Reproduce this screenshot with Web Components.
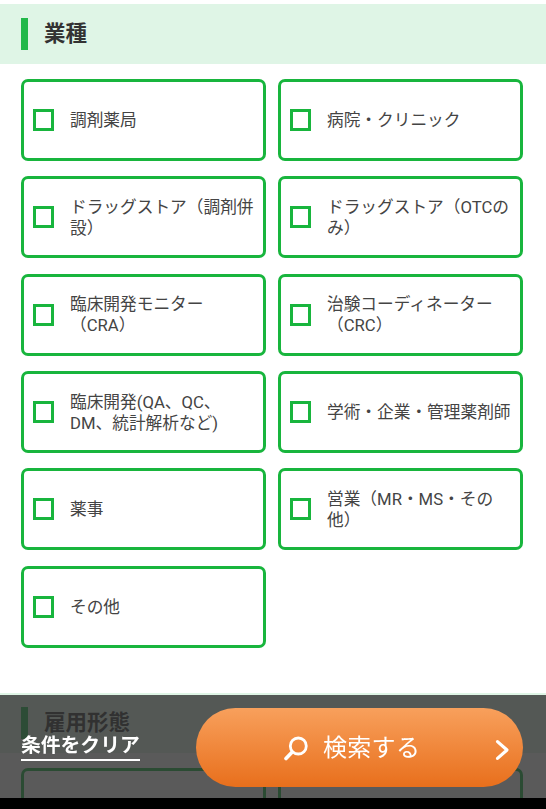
<!DOCTYPE html>
<html lang="ja">
<head>
<meta charset="utf-8">
<title>業種</title>
<style>
  html, body { margin: 0; height: 100%; overflow: hidden; background: #fff; }
  body {
    font-family: Roboto, "Noto Sans CJK JP", sans-serif;
    color: #444;
  }
  .page { padding-top: 4px; height: 805px; overflow: hidden; }
</style>
</head>
<body>
<div class="page">
  <section-title>業種</section-title>
  <check-grid>
    <check-card>調剤薬局</check-card>
    <check-card>病院・クリニック</check-card>
    <check-card>ドラッグストア（調剤併設）</check-card>
    <check-card>ドラッグストア（OTCのみ）</check-card>
    <check-card>臨床開発モニター（CRA）</check-card>
    <check-card>治験コーディネーター（CRC）</check-card>
    <check-card>臨床開発(QA、QC、DM、統計解析など)</check-card>
    <check-card>学術・企業・管理薬剤師</check-card>
    <check-card>薬事</check-card>
    <check-card>営業（MR・MS・その他）</check-card>
    <check-card>その他</check-card>
  </check-grid>
  <section-title>雇用形態</section-title>
  <check-grid>
    <check-card></check-card>
    <check-card></check-card>
  </check-grid>
</div>
<search-footer></search-footer>

<script>
class SectionTitle extends HTMLElement {
    constructor() {
        super();
        this.attachShadow({ mode: "open" });
        this.shadowRoot.innerHTML = `
        <style>
            :host {
                display: flex;
                align-items: center;
                height: 60px;
                padding-left: 21px;
                background: #dff5e6;
            }
            .bar {
                width: 7px;
                height: 32px;
                background: #22b84a;
                margin-right: 16px;
            }
            h2 {
                margin: 0;
                font-size: 21.5px;
                line-height: 30px;
                font-weight: bold;
                color: #333;
            }
        </style>
        <div class="bar"></div>
        <h2><slot></slot></h2>`;
    }
}

class CheckGrid extends HTMLElement {
    constructor() {
        super();
        this.attachShadow({ mode: "open" });
        this.shadowRoot.innerHTML = `
        <style>
            :host {
                display: grid;
                grid-template-columns: 245px 245px;
                column-gap: 12px;
                row-gap: 15.35px;
                padding: 15px 23px 45.65px 21px;
            }
        </style>
        <slot></slot>`;
    }
}

class CheckCard extends HTMLElement {
    constructor() {
        super();
        this.attachShadow({ mode: "open" });
        this.shadowRoot.innerHTML = `
        <style>
            :host {
                display: flex;
                align-items: center;
                box-sizing: border-box;
                height: 82px;
                padding: 0 6px 0 9px;
                border: 3px solid #18b53d;
                border-radius: 7px;
                background: #fff;
            }
            .box {
                flex: none;
                box-sizing: border-box;
                width: 21px;
                height: 22px;
                margin-right: 16px;
                border: 3px solid #18b53d;
                background: #fff;
            }
            .label {
                font-size: 16.7px;
                line-height: 21px;
                padding-top: 1px;
                color: #444;
            }
        </style>
        <span class="box"></span>
        <span class="label"><slot></slot></span>`;
    }
}

class SearchFooter extends HTMLElement {
    constructor() {
        super();
        this.attachShadow({ mode: "open" });
        this.shadowRoot.innerHTML = `
        <style>
            :host {
                position: fixed;
                left: 0;
                right: 0;
                top: 695px;
                bottom: 0;
                display: block;
            }
            .panel {
                height: 103px;
                box-sizing: border-box;
                padding: 13px 23px 0 21px;
                display: flex;
                align-items: flex-start;
                justify-content: space-between;
                background: rgba(49, 49, 49, .8);
            }
            .clear {
                margin-top: 24px;
                color: #fff;
                font-size: 19.8px;
                font-weight: bold;
                line-height: 27px;
                border-bottom: 2px solid #fff;
            }
            .btn {
                position: relative;
                display: flex;
                align-items: center;
                box-sizing: border-box;
                width: 327px;
                height: 79px;
                padding-left: 88px;
                border-radius: 40px;
                color: #fff;
                font-size: 24px;
                background: linear-gradient(#f8a05c, #e86f1c);
            }
            .btn svg.glass { margin-right: 13px; margin-top: 2px; }
            .btn span { margin-bottom: 5px; letter-spacing: .3px; }
            .btn svg.arrow { position: absolute; right: 13px; top: 31px; }
            .black { height: 11px; background: #000; }
        </style>
        <div class="panel">
            <span class="clear">条件をクリア</span>
            <div class="btn">
                <svg class="glass" width="26" height="26" viewBox="0 0 26 26" fill="none" stroke="#fff">
                    <circle cx="14.3" cy="10" r="8" stroke-width="2.8"/>
                    <path d="M8 16.2 L2 22.5" stroke-width="3.6" stroke-linecap="round"/>
                </svg>
                <span>検索する</span>
                <svg class="arrow" width="15" height="22" viewBox="0 0 15 22" fill="none" stroke="#fff" stroke-width="3.2" stroke-linecap="round" stroke-linejoin="round">
                    <path d="M2.5 2.6 L12 11 L2.5 19.4"/>
                </svg>
            </div>
        </div>
        <div class="black"></div>`;
    }
}

window.customElements.define('section-title', SectionTitle);
window.customElements.define('check-grid', CheckGrid);
window.customElements.define('check-card', CheckCard);
window.customElements.define('search-footer', SearchFooter);
</script>
</body>
</html>
